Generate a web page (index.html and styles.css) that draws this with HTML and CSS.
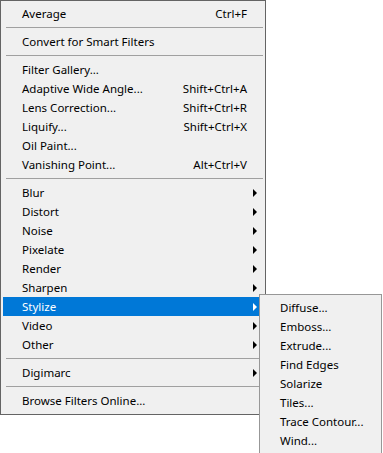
FILE: index.html
```html
<!DOCTYPE html>
<html lang="en">

<head>
    <meta charset="UTF-8">
    <meta name="viewport" content="width=device-width, initial-scale=1.0">
    <title>Filter</title>
    <link rel="stylesheet" href="styles.css">
</head>

<body>
    <div id="stage">
        <div class="menu main">
            <div class="item"><span class="label">Average</span><span class="key">Ctrl+F</span></div>
            <div class="sep"></div>
            <div class="item"><span class="label">Convert for Smart Filters</span></div>
            <div class="sep"></div>
            <div class="item"><span class="label">Filter Gallery...</span></div>
            <div class="item"><span class="label">Adaptive Wide Angle...</span><span class="key">Shift+Ctrl+A</span></div>
            <div class="item"><span class="label">Lens Correction...</span><span class="key">Shift+Ctrl+R</span></div>
            <div class="item"><span class="label">Liquify...</span><span class="key">Shift+Ctrl+X</span></div>
            <div class="item"><span class="label">Oil Paint...</span></div>
            <div class="item"><span class="label">Vanishing Point...</span><span class="key">Alt+Ctrl+V</span></div>
            <div class="sep"></div>
            <div class="item sub"><span class="label">Blur</span><span class="arrow"></span></div>
            <div class="item sub"><span class="label">Distort</span><span class="arrow"></span></div>
            <div class="item sub"><span class="label">Noise</span><span class="arrow"></span></div>
            <div class="item sub"><span class="label">Pixelate</span><span class="arrow"></span></div>
            <div class="item sub"><span class="label">Render</span><span class="arrow"></span></div>
            <div class="item sub"><span class="label">Sharpen</span><span class="arrow"></span></div>
            <div class="item sub active"><span class="label">Stylize</span><span class="arrow"></span>
                <!-- open submenu -->
                <div class="menu submenu">
                    <div class="item"><span class="label">Diffuse...</span></div>
                    <div class="item"><span class="label">Emboss...</span></div>
                    <div class="item"><span class="label">Extrude...</span></div>
                    <div class="item"><span class="label">Find Edges</span></div>
                    <div class="item"><span class="label">Solarize</span></div>
                    <div class="item"><span class="label">Tiles...</span></div>
                    <div class="item"><span class="label">Trace Contour...</span></div>
                    <div class="item"><span class="label">Wind...</span></div>
                </div>
            </div>
            <div class="item sub"><span class="label">Video</span><span class="arrow"></span></div>
            <div class="item sub"><span class="label">Other</span><span class="arrow"></span></div>
            <div class="sep"></div>
            <div class="item sub"><span class="label">Digimarc</span><span class="arrow"></span></div>
            <div class="sep"></div>
            <div class="item"><span class="label">Browse Filters Online...</span></div>
        </div>
    </div>
</body>

</html>
```

FILE: styles.css
```css
* {
    box-sizing: border-box;
}

body {
    margin: 0;
    background: #ffffff;
    font-family: "Noto Sans", "Noto Sans CJK KR", sans-serif;
    font-size: 11.5px;
    color: #000000;
}

#stage {
    width: 383px;
    height: 453px;
}

.menu {
    background-color: #f0f0f0;
    border: 1px solid #979797;
}

.main {
    width: 266px;
    padding: 3px 2px 4px 2px;
    border-color: #646464;
}

.item {
    position: relative;
    display: flex;
    align-items: center;
    height: 19px;
    padding: 0 16px 0 19px;
}

.label {
    flex: 1;
    white-space: nowrap;
}

.key {
    white-space: nowrap;
}

.arrow {
    width: 0;
    height: 0;
    margin-right: -10px;
    border-top: 4px solid transparent;
    border-bottom: 4px solid transparent;
    border-left: 4px solid #000000;
}

.sep {
    height: 1px;
    margin: 4px 0 4px 3px;
    background-color: #a0a0a0;
}

.active {
    background-color: #0078d7;
    color: #ffffff;
}

.active .arrow {
    border-left-color: #ffffff;
}

/* sits over the main menu, opened next to Stylize */
.submenu {
    position: absolute;
    left: 256px;
    top: -3px;
    width: 123px;
    padding: 3px 2px 3px 1px;
    color: #000000;
    z-index: 2;
}
```
